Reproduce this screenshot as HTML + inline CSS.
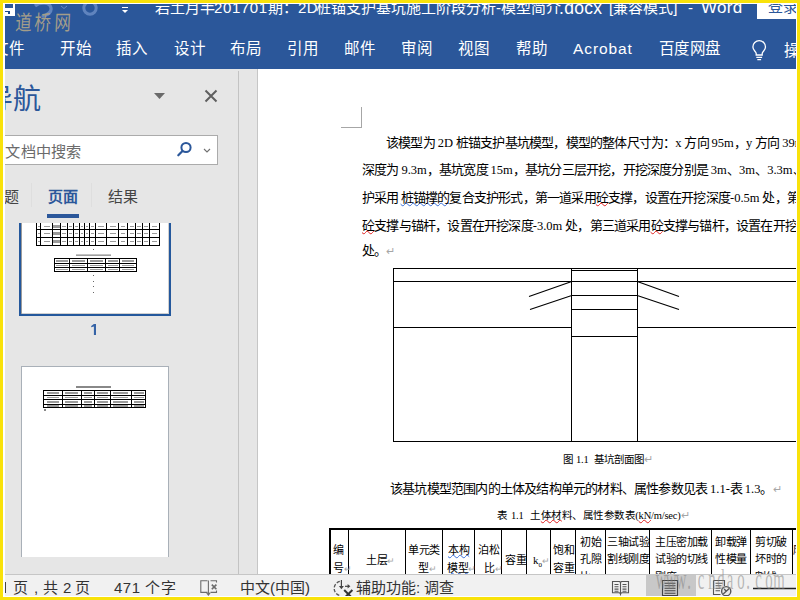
<!DOCTYPE html>
<html lang="zh-CN"><head><meta charset="utf-8">
<style>
*{margin:0;padding:0;box-sizing:border-box}
html,body{width:800px;height:600px;overflow:hidden;background:#f9e20a}
body{position:relative;font-family:"Liberation Sans",sans-serif}
#frame{position:absolute;left:3px;top:3px;width:794px;height:594px;background:#fff}
#app{position:absolute;left:0;top:0;width:800px;height:600px;clip-path:inset(4px 4px 4px 5px);overflow:hidden}
.a{position:absolute;white-space:nowrap}
#hdr{position:absolute;left:0;top:0;width:800px;height:69px;background:#2b579a}
.ti{top:-3px;font-size:15px;color:#fff;line-height:22px}
.tab{top:38px;font-size:15.5px;color:#fff;line-height:22px}
#nav{position:absolute;left:0;top:69px;width:239px;height:505px;background:#e6e6e6}
#gap{position:absolute;left:239px;top:69px;width:19px;height:505px;background:#e6e6e6}
#doc{position:absolute;left:258px;top:69px;width:542px;height:505px;background:#fff}
#status{position:absolute;left:0;top:574px;width:800px;height:26px;background:#f1f1f1;border-top:1px solid #c6c6c6}
.st{top:578px;font-size:15px;color:#333;line-height:20px}
.dt{font-size:13px;color:#000;line-height:16px;letter-spacing:-0.8px}
.l{font-family:"Liberation Serif",serif;letter-spacing:0;font-size:12.5px}
.ret{color:#a6a6a6;font-size:11px;letter-spacing:0}
.wb{text-decoration:underline wavy #3a6fd8;text-decoration-thickness:1px;text-underline-offset:0px}
.wr{text-decoration:underline wavy #e02020;text-decoration-thickness:1px;text-underline-offset:0px}
.tc{font-size:11px;line-height:13px;color:#000;letter-spacing:-0.4px}
.cap{font-size:10.5px;line-height:13px;color:#000;letter-spacing:0.5px}
.cap .l{font-size:10.5px;letter-spacing:-0.2px}
.cap .wr,.tc .wb{text-underline-offset:0px}
</style></head><body>
<div id="frame"></div>
<div id="app">
  <!-- ================= HEADER ================= -->
  <div id="hdr"></div>
  <div class="a ti" style="left:155px">岩土月半</div>
  <div class="a ti" style="left:214px;letter-spacing:0.6px">201701</div>
  <div class="a ti" style="left:268px">期：</div>
  <div class="a ti" style="left:298px;letter-spacing:0.5px">2D</div>
  <div class="a ti" style="left:316px">桩锚支护基坑施工阶段分析-模型简介</div>
  <div class="a ti" style="left:559px;font-size:17.5px;letter-spacing:0.3px">.docx</div>
  <div class="a ti" style="left:609px">[兼容模式]</div>
  <div class="a ti" style="left:688px">-</div>
  <div class="a ti" style="left:701px;font-size:17px;letter-spacing:0.3px">Word</div>
  <svg class="a" style="left:0;top:0" width="800" height="69" viewBox="0 0 800 69">
    <!-- save icon -->
    <rect x="4" y="4" width="11" height="12" fill="#fff"/>
    <rect x="5" y="4" width="8" height="4" fill="#2b579a"/>
    <path d="M5 11 H10 V14 H8 V12 H5 Z" fill="#1f4a8c"/>
    <!-- undo (ghosted) -->
    <path d="M35 6 C40 2 50 2 51 8 C52 14 45 15 42 17" fill="none" stroke="rgba(140,170,220,0.55)" stroke-width="3.2"/>
    <path d="M61 6 L64 8.5 L67 6" fill="none" stroke="rgba(140,170,220,0.6)" stroke-width="1"/>
    <!-- redo circle (ghosted) -->
    <circle cx="90" cy="8" r="6.2" fill="none" stroke="rgba(140,170,220,0.55)" stroke-width="3"/>
    <!-- customize QAT -->
    <path d="M122 7.5 H128" stroke="#fff" stroke-width="1"/>
    <path d="M122 10 H128 L125 13 Z" fill="#fff"/>
    <!-- lightbulb -->
    <g fill="none" stroke="#fff" stroke-width="1.3">
      <path d="M756.2 55 V53.5 C756.2 51.6 752.9 50.4 752.9 47 A6.3 6.3 0 1 1 765.5 47 C765.5 50.4 762.2 51.6 762.2 53.5 V55 Z"/>
      <path d="M756.3 57.3 H762.1 M757.3 59.6 H761.1"/>
    </g>
  </svg>
  <div class="a" style="left:16px;top:6.5px;font-size:16.5px;line-height:24px;color:#a39d8a;font-weight:200;letter-spacing:2.5px;transform:scaleY(1.26) skewX(-4deg);transform-origin:0 0">道桥网</div>
  <div class="a" style="left:757px;top:0;width:50px;height:19px;background:#fff"></div>
  <div class="a" style="left:768px;top:-4px;font-size:15px;color:#2b579a;line-height:22px">登录</div>

  <div class="a tab" style="left:-7px">文件</div>
  <div class="a tab" style="left:60px">开始</div>
  <div class="a tab" style="left:116px">插入</div>
  <div class="a tab" style="left:174px">设计</div>
  <div class="a tab" style="left:230px">布局</div>
  <div class="a tab" style="left:287px">引用</div>
  <div class="a tab" style="left:344px">邮件</div>
  <div class="a tab" style="left:401px">审阅</div>
  <div class="a tab" style="left:458px">视图</div>
  <div class="a tab" style="left:516px">帮助</div>
  <div class="a tab" style="left:573px;letter-spacing:0.9px">Acrobat</div>
  <div class="a tab" style="left:658.5px;letter-spacing:-0.4px">百度网盘</div>
  <div class="a tab" style="left:783.5px;top:39.5px">操作</div>

  <!-- ================= PANES ================= -->
  <div id="nav"></div>
  <div id="gap"></div>
  <div class="a" style="left:238px;top:71px;width:1px;height:503px;background:#c3c3c3"></div>
  <div class="a" style="left:257px;top:69px;width:1px;height:505px;background:#c6c6c6"></div>
  <div id="doc"></div>

  <!-- document content -->
  <svg class="a" style="left:0;top:0" width="800" height="574" viewBox="0 0 800 574">
    <path d="M341 127.5 H361.5 V107" fill="none" stroke="#a6a6a6" stroke-width="1" shape-rendering="crispEdges"/>
    <g stroke="#000" stroke-width="1" fill="none" shape-rendering="crispEdges">
      <path d="M393.5 268.5 H800 M393.5 281.5 H800 M393.5 268 V441.5 H800"/>
      <path d="M393.5 327.5 H571.5 M637.5 327.5 H800"/>
      <path d="M571.5 268 V441 M637.5 268 V441"/>
      <path d="M571.5 270.5 H637.5 M571.5 295.5 H637.5 M571.5 309.5 H637.5 M571.5 336.5 H637.5"/>
    </g>
    <g stroke="#000" stroke-width="1.1" fill="none">
      <path d="M571 281.7 L529 296.5 M571 295.7 L530 309.5"/>
      <path d="M638 281.7 L679 296.5 M638 295.7 L679 309.5"/>
    </g>
  </svg>
  <div class="a dt" style="left:386px;top:135px">该模型为 <span class="l">2D</span> 桩锚支护基坑模型，模型的整体尺寸为：<span class="l">x</span> 方向 <span class="l">95m</span>，<span class="l">y</span> 方向 <span class="l">39m</span>，</div>
  <div class="a dt" style="left:362px;top:162px">深度为 <span class="l">9.3m</span>，基坑宽度 <span class="l">15m</span>，基坑分三层开挖，开挖深度分别是 <span class="l">3m</span>、<span class="l">3m</span>、<span class="l">3.3m</span>、</div>
  <div class="a dt" style="left:362px;top:190px">护采用<span class="wb" style="margin-left:2px">桩锚撑的</span>复合支护形式，第一道采用<span class="wr">砼</span>支撑，设置在开挖深度<span class="l">-0.5m</span> 处，第二</div>
  <div class="a dt" style="left:362px;top:218px"><span class="wr">砼</span>支撑与锚杆，设置在开挖深度<span class="l">-3.0m</span> 处，第三道采用<span class="wr">砼</span>支撑与锚杆，设置在开挖深度</div>
  <div class="a dt" style="left:362px;top:243px">处。<span class="ret">↵</span></div>
  <div class="a cap" style="left:563px;top:453px;letter-spacing:0px">图 <span class="l">1.1</span>&nbsp; 基坑剖面图<span class="ret">↵</span></div>
  <div class="a dt" style="left:390px;top:481px;letter-spacing:-0.8px">该基坑模型范围内的土体及结构单元的材料、属性参数见表 <span class="l">1.1-</span>表 <span class="l">1.3</span>。<span class="ret">↵</span></div>
  <div class="a cap" style="left:497px;top:509px">表 <span class="l">1.1</span>&nbsp; 土<span class="wr">体材</span>料、属性参数表<span class="l">(<span class="wr">kN</span>/m/sec)</span><span class="ret">↵</span></div>

  <!-- table -->
  <svg class="a" style="left:0;top:0" width="800" height="574" viewBox="0 0 800 574">
    <g stroke="#000" fill="none" shape-rendering="crispEdges">
      <path d="M329 529 H800" stroke-width="2"/>
      <path d="M330 528 V574" stroke-width="2"/>
      <path d="M348.5 529 V574 M405.5 529 V574 M442.5 529 V574 M474.5 529 V574 M501.5 529 V574 M526.5 529 V574 M550.5 529 V574 M575.5 529 V574 M605.5 529 V574 M649.5 529 V574 M711.5 529 V574 M750.5 529 V574 M792.5 529 V574" stroke-width="1"/>
    </g>
  </svg>
  <div class="a tc" style="left:333px;top:544px">编</div>
  <div class="a tc" style="left:333px;top:562px">号<span class="ret" style="font-size:9px">↵</span></div>
  <div class="a tc" style="left:366px;top:553.5px">土层<span class="ret" style="font-size:9px">↵</span></div>
  <div class="a tc" style="left:408px;top:544px">单元类</div>
  <div class="a tc" style="left:418px;top:562px">型<span class="ret" style="font-size:9px">↵</span></div>
  <div class="a tc" style="left:448px;top:544px"><span class="wb">本构</span></div>
  <div class="a tc" style="left:447px;top:562px"><span class="wb">模型</span><span class="ret" style="font-size:9px">↵</span></div>
  <div class="a tc" style="left:478px;top:544px">泊松</div>
  <div class="a tc" style="left:484px;top:562px">比<span class="ret" style="font-size:9px">↵</span></div>
  <div class="a tc" style="left:505px;top:553.5px">容重</div>
  <div class="a tc" style="left:533px;top:553.5px"><span class="l" style="font-size:11px">k<sub style="font-size:7px">0</sub></span><span class="ret" style="font-size:9px">↵</span></div>
  <div class="a tc" style="left:553px;top:544px">饱和</div>
  <div class="a tc" style="left:553px;top:562px">容重</div>
  <div class="a tc" style="left:580px;top:536px">初始</div>
  <div class="a tc" style="left:580px;top:553px">孔隙</div>
  <div class="a tc" style="left:580px;top:571px">比</div>
  <div class="a tc" style="left:607px;top:536px">三轴试验</div>
  <div class="a tc" style="left:607px;top:553px">割线刚度</div>

  <div class="a tc" style="left:655px;top:536px">主压密加载</div>
  <div class="a tc" style="left:655px;top:553px">试验的切线</div>
  <div class="a tc" style="left:655px;top:571px">刚度</div>
  <div class="a tc" style="left:715px;top:536px">卸载弹</div>
  <div class="a tc" style="left:715px;top:553px">性模量</div>
  <div class="a tc" style="left:755px;top:536px">剪切破</div>
  <div class="a tc" style="left:755px;top:553px">坏时的</div>
  <div class="a tc" style="left:755px;top:571px">割线</div>
  <div class="a tc" style="left:793px;top:544px">摩</div>

  <!-- nav pane content -->
  <div class="a" style="left:-15px;top:82px;font-size:28px;line-height:36px;color:#2b579a">导航</div>
  <svg class="a" style="left:0;top:0" width="240" height="574" viewBox="0 0 240 574">
    <path d="M154 93 L165 93 L159.5 99 Z" fill="#6a6a6a"/>
    <path d="M205.5 90.5 L216.5 101.5 M216.5 90.5 L205.5 101.5" stroke="#5f5f5f" stroke-width="2"/>
  </svg>
  <div class="a" style="left:-20px;top:135px;width:238px;height:30px;background:#fff;border:1px solid #ababab"></div>
  <div class="a" style="left:5.3px;top:140.5px;font-size:15.2px;line-height:22px;color:#6b6b6b;letter-spacing:0.3px">文档中搜索</div>
  <svg class="a" style="left:170px;top:136px" width="46" height="28" viewBox="170 136 46 28">
    <circle cx="186" cy="147.5" r="4.6" fill="none" stroke="#2b579a" stroke-width="2"/>
    <path d="M182.5 151 L178.3 155.3" stroke="#2b579a" stroke-width="2.2" stroke-linecap="round"/>
    <path d="M204 149 L207 152 L210 149" fill="none" stroke="#707070" stroke-width="1.1"/>
  </svg>
  <div class="a" style="left:-11px;top:186px;font-size:15px;line-height:22px;color:#444">标题</div>
  <div class="a" style="left:48px;top:186px;font-size:15px;line-height:22px;color:#2b579a;font-weight:bold">页面</div>
  <div class="a" style="left:108px;top:186px;font-size:15px;line-height:22px;color:#444">结果</div>
  <div class="a" style="left:31px;top:183px;width:1px;height:24px;background:#dedede"></div>
  <div class="a" style="left:91px;top:183px;width:1px;height:24px;background:#dedede"></div>
  <div class="a" style="left:47px;top:214px;width:32px;height:4px;background:#2b579a"></div>

  <!-- thumbnails -->
  <div class="a" style="left:0;top:223px;width:238px;height:334px;overflow:hidden">
    <div class="a" style="left:19px;top:-120px;width:152px;height:213px;border:2px solid #24589c;box-shadow:inset 1px 1px 0 #9c9c9c, inset -1px -1px 0 #d0d0d0;background:#fff"></div>
    <svg class="a" style="left:0;top:0" width="238" height="351" viewBox="0 223 238 351">
      <g stroke="#000" stroke-width="1" shape-rendering="crispEdges" fill="none">
        <path d="M36.5 223 V245.5 H159.5 V223 M36.5 229.5 H159.5 M36.5 237.5 H159.5"/>
        <path d="M40.5 223 V245 M52.5 223 V245 M60.5 223 V245 M67.5 223 V245 M73.5 223 V245 M79.5 223 V245 M84.5 223 V245 M89.5 223 V245 M95.5 223 V245 M106.5 223 V245 M118.5 223 V245 M127.5 223 V245 M135.5 223 V245 M142.5 223 V245 M149.5 223 V245"/>
        <rect x="54.5" y="258.5" width="82" height="13"/>
        <path d="M54.5 263.5 H136.5 M54.5 267.5 H136.5 M69.5 258 V271 M87.5 258 V271 M105.5 258 V271 M119.5 258 V271"/>
      </g>
      <g fill="#666">
        <rect x="76" y="254.5" width="35" height="1.3" fill="#888"/><rect x="93" y="249" width="1" height="1"/>
        <rect x="93" y="275" width="1" height="1"/><rect x="93" y="281" width="1" height="1"/>
        <rect x="93" y="286" width="1" height="1"/><rect x="93" y="292" width="1" height="1"/>
      </g>
      <g fill="#9a9a9a">
        <rect x="38" y="226" width="2" height="1"/><rect x="38" y="233" width="2" height="1"/><rect x="38" y="241" width="2" height="1"/><rect x="44" y="226" width="6" height="1"/><rect x="44" y="233" width="6" height="1"/><rect x="44" y="241" width="6" height="1"/><rect x="54" y="226" width="4" height="1"/><rect x="54" y="233" width="4" height="1"/><rect x="54" y="241" width="4" height="1"/><rect x="62" y="226" width="4" height="1"/><rect x="62" y="233" width="4" height="1"/><rect x="62" y="241" width="4" height="1"/><rect x="69" y="226" width="3" height="1"/><rect x="69" y="233" width="3" height="1"/><rect x="69" y="241" width="3" height="1"/><rect x="75" y="226" width="3" height="1"/><rect x="75" y="233" width="3" height="1"/><rect x="75" y="241" width="3" height="1"/><rect x="81" y="226" width="2" height="1"/><rect x="81" y="233" width="2" height="1"/><rect x="81" y="241" width="2" height="1"/><rect x="86" y="226" width="2" height="1"/><rect x="86" y="233" width="2" height="1"/><rect x="86" y="241" width="2" height="1"/><rect x="91" y="226" width="3" height="1"/><rect x="91" y="233" width="3" height="1"/><rect x="91" y="241" width="3" height="1"/><rect x="98" y="226" width="6" height="1"/><rect x="98" y="233" width="6" height="1"/><rect x="98" y="241" width="6" height="1"/><rect x="110" y="226" width="6" height="1"/><rect x="110" y="233" width="6" height="1"/><rect x="110" y="241" width="6" height="1"/><rect x="121" y="226" width="4" height="1"/><rect x="121" y="233" width="4" height="1"/><rect x="121" y="241" width="4" height="1"/><rect x="130" y="226" width="4" height="1"/><rect x="130" y="233" width="4" height="1"/><rect x="130" y="241" width="4" height="1"/><rect x="137" y="226" width="4" height="1"/><rect x="137" y="233" width="4" height="1"/><rect x="137" y="241" width="4" height="1"/><rect x="144" y="226" width="4" height="1"/><rect x="144" y="233" width="4" height="1"/><rect x="144" y="241" width="4" height="1"/><rect x="152" y="226" width="5" height="1"/><rect x="152" y="233" width="5" height="1"/><rect x="152" y="241" width="5" height="1"/><rect x="53" y="225" width="7" height="3"/><rect x="53" y="232" width="7" height="3"/><rect x="53" y="240" width="7" height="3"/>
        <rect x="56" y="260" width="12" height="2"/><rect x="72" y="260" width="13" height="2"/><rect x="90" y="260" width="13" height="2"/><rect x="108" y="260" width="10" height="2"/><rect x="122" y="260" width="12" height="2"/>
        <rect x="56" y="265" width="12" height="1"/><rect x="72" y="265" width="13" height="1"/><rect x="90" y="265" width="13" height="1"/><rect x="108" y="265" width="10" height="1"/><rect x="122" y="265" width="12" height="1"/>
        <rect x="56" y="269" width="12" height="1"/><rect x="72" y="269" width="13" height="1"/><rect x="90" y="269" width="13" height="1"/><rect x="108" y="269" width="10" height="1"/><rect x="122" y="269" width="12" height="1"/>
      </g>
    </svg>
    <svg class="a" style="left:85px;top:95px" width="16" height="18" viewBox="85 318 16 18"><path d="M93.9 324 H96 V335 H93.9 V326.5 L91.2 327.3 V326.1 Z" fill="#3563a6"/></svg>
    <div class="a" style="left:21px;top:143px;width:148px;height:192px;border:1px solid #a9b0b8;background:#fff"></div>
    <svg class="a" style="left:0;top:0" width="238" height="351" viewBox="0 223 238 351">
      <g stroke="#000" stroke-width="1" shape-rendering="crispEdges" fill="none">
        <rect x="43.5" y="390.5" width="102" height="17"/>
        <path d="M43.5 395.5 H145.5 M43.5 399.5 H145.5 M43.5 404.5 H145.5 M62.5 390 V408 M81.5 390 V408 M94.5 390 V408 M110.5 390 V408 M131.5 390 V408"/>
      </g>
      <g fill="#888">
        <rect x="76" y="386" width="35" height="2"/>
        <rect x="44" y="409" width="2" height="2"/>
      </g>
      <g fill="#9a9a9a">
        <rect x="47" y="392" width="12" height="2"/><rect x="65" y="392" width="13" height="2"/><rect x="84" y="392" width="8" height="2"/><rect x="97" y="392" width="11" height="2"/><rect x="113" y="392" width="15" height="2"/><rect x="134" y="392" width="10" height="2"/>
        <rect x="47" y="397" width="12" height="1"/><rect x="65" y="397" width="13" height="1"/><rect x="84" y="397" width="8" height="1"/><rect x="97" y="397" width="11" height="1"/><rect x="113" y="397" width="15" height="1"/><rect x="134" y="397" width="10" height="1"/>
        <rect x="47" y="401" width="12" height="2"/><rect x="65" y="401" width="13" height="2"/><rect x="84" y="401" width="8" height="2"/><rect x="97" y="401" width="11" height="2"/><rect x="113" y="401" width="15" height="2"/><rect x="134" y="401" width="10" height="2"/>
        <rect x="47" y="405" width="12" height="2"/><rect x="65" y="405" width="13" height="2"/><rect x="84" y="405" width="8" height="2"/><rect x="97" y="405" width="11" height="2"/><rect x="113" y="405" width="15" height="2"/><rect x="134" y="405" width="10" height="2"/>
      </g>
    </svg>
  </div>

  <!-- ================= STATUS ================= -->
  <div id="status"></div>
  <svg class="a" style="left:0;top:574px" width="800" height="26" viewBox="0 574 800 26">
    <!-- proofing icon -->
    <g fill="none" stroke="#6b6b6b" stroke-width="1.1">
      <path d="M207.5 580.8 H200.8 V592.4 H207.5"/>
      <path d="M208.4 580.5 V594"/>
      <path d="M206.6 592.6 L208.4 595 L210.2 592.6"/>
      <path d="M210.5 580.8 H216.5 V582.6 M210.5 592.4 H216.5 V590.6"/>
      <path d="M211.8 584.6 L216.4 589.2 M216.4 584.6 L211.8 589.2" stroke-width="1.6"/>
    </g>
    <!-- accessibility icon -->
    <path d="M339.8 581.4 A7.2 7.2 0 0 0 340.8 595.6" fill="none" stroke="#555" stroke-width="1.3" stroke-dasharray="3.4 1.6"/>
    <path d="M341.4 580 V587" stroke="#444" stroke-width="1.2"/>
    <path d="M338.9 586 L341.4 589.2 L343.9 586 Z" fill="#444"/>
    <path d="M345 586.3 H348.5" stroke="#444" stroke-width="1.2"/>
    <path d="M347.6 584 L350.4 586.3 L347.6 588.6 Z" fill="#444"/>
    <path d="M344.2 590 L352.2 598 M352.4 590 L344.4 598" stroke="#333" stroke-width="2"/>
    <!-- read mode (book) -->
    <g fill="none" stroke="#555" stroke-width="1.1">
      <path d="M612.5 581.5 H619.5 L620.5 582.5 L621.5 581.5 H628.5 V592.8 H621.5 L620.5 593.8 L619.5 592.8 H612.5 Z"/>
      <path d="M620.5 582.5 V595.5"/>
      <path d="M614.5 584.5 H618.5 M614.5 586.8 H618.5 M614.5 589.1 H618.5 M614.5 591.2 H618.5 M622.5 584.5 H626.5 M622.5 586.8 H626.5 M622.5 589.1 H626.5 M622.5 591.2 H626.5"/>
    </g>
    <!-- print layout highlighted -->
    <rect x="646" y="575" width="50" height="22" fill="#c8c8c8"/>
    <g fill="none" stroke="#444" stroke-width="1.1">
      <path d="M662.5 580.5 H677.5 V595.5 H662.5 Z"/>
      <path d="M664.5 583.3 H675.5 M664.5 585.8 H675.5 M664.5 588.3 H675.5 M664.5 590.8 H675.5 M664.5 593.3 H675.5"/>
    </g>
    <!-- web layout -->
    <g fill="none" stroke="#555" stroke-width="1.1">
      <path d="M713.5 580.5 H724.5 V586 M713.5 580.5 V594.5 H720.5"/>
      <path d="M715.5 583.3 H722.5 M715.5 585.8 H721.5 M715.5 588.3 H720.5 M715.5 590.8 H720"/>
    </g>
    <circle cx="726.2" cy="591.2" r="4.6" fill="#e8e8e8" stroke="#555" stroke-width="1.4"/>
    <path d="M723.2 594 L729.2 588.4 M724.2 589 L726.5 591.5" stroke="#555" stroke-width="1.3"/>
    <!-- zoom slider -->
    <path d="M753 588.5 H796" stroke="#222" stroke-width="1.5"/>
  </svg>
  <svg class="a" style="left:0;top:0" width="800" height="600" viewBox="0 0 800 600"><g transform="scale(0.5 1)"><text x="1322.0 1342.0 1362.0 1378.0 1402.0 1424.0 1442.0 1460.0 1482.0 1496.0 1517.0 1538.0 1558.0" y="589.5" text-anchor="middle" font-family="Liberation Serif" font-size="29.5" fill="rgba(125,125,125,0.52)">www.cndao.com</text></g></svg>
  <div class="a" style="left:4.6px;top:582px;width:1.3px;height:11px;background:#444"></div>
  <div class="a st" style="left:13px">页</div>
  <div class="a st" style="left:34px">,</div>
  <div class="a st" style="left:43px">共</div>
  <div class="a st" style="left:63px">2</div>
  <div class="a st" style="left:75px">页</div>
  <div class="a st" style="left:114px;letter-spacing:0.5px">471 个字</div>
  <div class="a st" style="left:240px">中文(中国)</div>
  <div class="a st" style="left:356px">辅助功能: 调查</div>
</div>
</body></html>
